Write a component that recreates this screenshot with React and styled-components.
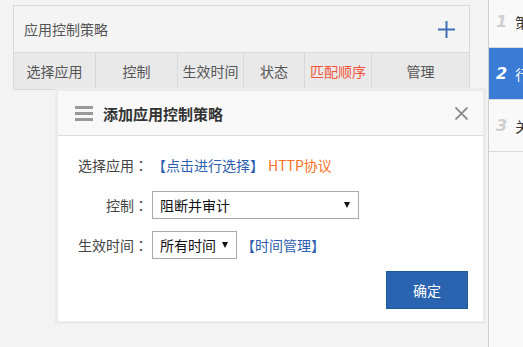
import React from 'react';
import styled, { createGlobalStyle } from 'styled-components';

const Global = createGlobalStyle`
  html, body {
    margin: 0;
    padding: 0;
    background: #f3f3f3;
    font-family: "Liberation Sans", "Noto Sans CJK SC", sans-serif;
    font-size: 14px;
    color: #333;
  }
  * { box-sizing: border-box; }
`;

const Page = styled.div`
  display: flex;
  width: 523px;
  height: 347px;
  overflow: hidden;
`;

const Main = styled.div`
  position: relative;
  flex: 1;
  padding: 5px 18px 0 13px;
`;

const Panel = styled.div`
  border: 1px solid #d8d8d8;
  width: 457px;
`;

const PanelHead = styled.div`
  height: 46px;
  display: flex;
  align-items: center;
  justify-content: space-between;
  padding: 0 14px 0 10px;
  background: #f4f4f4;
  color: #555;
  font-family: "Noto Sans CJK SC", sans-serif;
  font-size: 14px;
`;

const AddBtn = styled.span`
  display: flex;
  color: #3f6fb5;
`;

const HeadRow = styled.div`
  display: grid;
  grid-template-columns: 81px 82px 66px 61px 67px 1fr;
  height: 37px;
  border-top: 1px solid #d8d8d8;
  background: #e9e9e9;
`;

const Th = styled.div`
  display: flex;
  align-items: center;
  justify-content: center;
  border-left: ${(p) => (p.$first ? 'none' : '1px solid #d8d8d8')};
  color: ${(p) => (p.$hot ? '#f0553a' : '#555')};
  font-family: "Noto Sans CJK SC", sans-serif;
  font-size: 14px;
`;

const Dialog = styled.div`
  position: absolute;
  left: 55px;
  top: 88px;
  width: 431px;
  height: 236px;
  border: 3px solid #ebebeb;
  background: #fff;
  display: flex;
  flex-direction: column;
`;

const DialogHead = styled.div`
  height: 45px;
  display: flex;
  align-items: center;
  padding: 0 15px 0 17px;
  background: #f8f8f8;
  border-bottom: 1px solid #dcdcdc;
`;

const Burger = styled.span`
  display: flex;
  flex-direction: column;
  gap: 3px;
  width: 18px;
  margin-right: 10px;
  span {
    height: 3px;
    background: #999;
  }
`;

const DialogTitle = styled.div`
  flex: 1;
  font-family: "Noto Sans CJK SC", sans-serif;
  font-size: 15px;
  font-weight: bold;
  color: #333;
`;

const Close = styled.span`
  display: flex;
  color: #888;
`;

const Body = styled.div`
  flex: 1;
  display: flex;
  flex-direction: column;
  gap: 12px;
  padding: 15px 15px 0 20px;
  font-family: "Noto Sans CJK SC", sans-serif;
`;

const Row = styled.div`
  display: flex;
  align-items: center;
  height: 28px;
`;

const Label = styled.div`
  width: 70px;
  margin-right: 4px;
  text-align: ${(p) => (p.$left ? 'left' : 'right')};
  color: #444;
  font-size: 14px;
  white-space: nowrap;
`;

const Colon = styled.span`
  font-family: "Noto Sans CJK TC", sans-serif;
`;

const Link = styled.span`
  color: #2d5fae;
  font-size: 14px;
  margin-left: ${(p) => p.$gap || 0}px;
`;

const Proto = styled.span`
  color: #fb7124;
  font-size: 14px;
  margin-left: 4px;
`;

const Select = styled.div`
  width: ${(p) => p.$w}px;
  height: 28px;
  display: flex;
  align-items: center;
  justify-content: space-between;
  padding: 0 8px 0 7px;
  border: 1px solid #a9a9a9;
  background: #fff;
  color: #111;
  font-size: 14px;
`;

const Caret = styled.span`
  width: 0;
  height: 0;
  border-left: 3.5px solid transparent;
  border-right: 3.5px solid transparent;
  border-top: 6px solid #111;
`;

const Footer = styled.div`
  display: flex;
  justify-content: flex-end;
`;

const Confirm = styled.button`
  width: 82px;
  height: 38px;
  background: #2a63b0;
  border: 1px solid #1c5b98;
  color: #fff;
  font-family: "Noto Sans CJK SC", sans-serif;
  font-size: 14px;
  padding: 0;
`;

const Side = styled.div`
  width: 35px;
  border-left: 1px solid #cfcfcf;
  background: #f9f9f9;
  overflow: hidden;
`;

const Steps = styled.div`
  margin-top: -4px;
`;

const Step = styled.div`
  height: 52px;
  display: flex;
  align-items: center;
  gap: 8px;
  padding-left: 7px;
  border-bottom: 1px solid #dcdcdc;
  background: ${(p) => (p.$active ? '#3a7bd5' : 'transparent')};
  color: ${(p) => (p.$active ? '#fff' : '#333')};
  white-space: nowrap;
  overflow: hidden;
  font-family: "Noto Sans CJK SC", sans-serif;
  font-size: 14px;
`;

const Num = styled.span`
  font-family: "DejaVu Sans", sans-serif;
  font-style: italic;
  font-weight: 900;
  font-size: 16px;
  color: ${(p) => (p.$active ? '#fff' : '#cfcfcf')};
`;

const columns = ['选择应用', '控制', '生效时间', '状态', '匹配顺序', '管理'];
const steps = ['策略选择', '行为控制', '关联设置'];

export default function App() {
  return (
    <Page>
      <Global />
      <Main>
        <Panel>
          <PanelHead>
            应用控制策略
            <AddBtn>
              <svg width="17" height="17" viewBox="0 0 17 17">
                <path d="M8.5 0v17M0 8.5h17" stroke="currentColor" strokeWidth="2" />
              </svg>
            </AddBtn>
          </PanelHead>
          <HeadRow>
            {columns.map((c, i) => (
              <Th key={c} $first={i === 0} $hot={c === '匹配顺序'}>
                {c}
              </Th>
            ))}
          </HeadRow>
        </Panel>

        <Dialog>
          <DialogHead>
            <Burger>
              <span />
              <span />
              <span />
            </Burger>
            <DialogTitle>添加应用控制策略</DialogTitle>
            <Close>
              <svg width="13" height="13" viewBox="0 0 13 13">
                <path d="M0.5 0.5l12 12M12.5 0.5l-12 12" stroke="currentColor" strokeWidth="1.8" />
              </svg>
            </Close>
          </DialogHead>
          <Body>
            <Row>
              <Label $left>选择应用<Colon>：</Colon></Label>
              <Link>【点击进行选择】</Link>
              <Proto>HTTP协议</Proto>
            </Row>
            <Row>
              <Label>控制<Colon>：</Colon></Label>
              <Select $w={207}>
                阻断并审计
                <Caret />
              </Select>
            </Row>
            <Row>
              <Label>生效时间<Colon>：</Colon></Label>
              <Select $w={85}>
                所有时间
                <Caret />
              </Select>
              <Link $gap={4}>【时间管理】</Link>
            </Row>
            <Footer>
              <Confirm>确定</Confirm>
            </Footer>
          </Body>
        </Dialog>
      </Main>
      <Side>
        <Steps>
          {steps.map((s, i) => (
            <Step key={s} $active={i === 1}>
              <Num $active={i === 1}>{i + 1}</Num>
              {s}
            </Step>
          ))}
        </Steps>
      </Side>
    </Page>
  );
}
